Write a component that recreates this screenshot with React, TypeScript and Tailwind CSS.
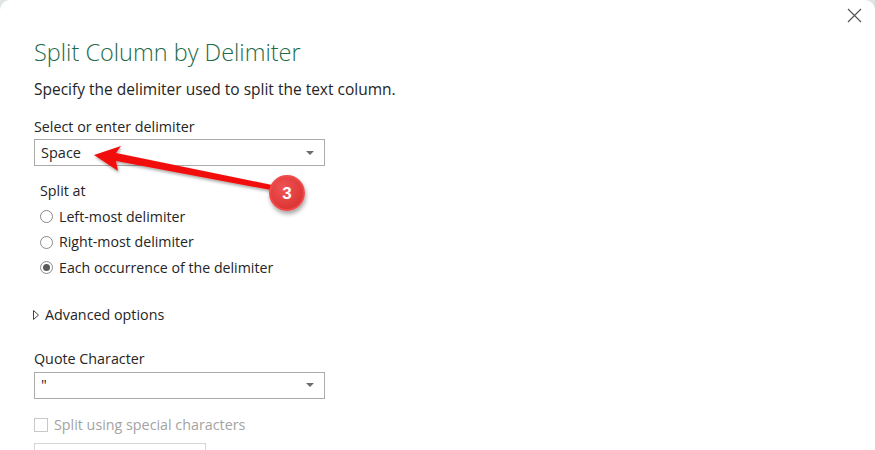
const FONT = "font-['Segoe_UI','Open_Sans',sans-serif]";

function Caret() {
  return (
    <svg width="8" height="4" viewBox="0 0 8 4" className="shrink-0">
      <path d="M0 0 L8 0 L4 4 Z" fill="#6b6b6b" />
    </svg>
  );
}

function SelectBox({ value }: { value: string }) {
  return (
    <div className="flex h-[27px] w-[291px] items-center justify-between border border-[#ababab] bg-white pl-[6px] pr-[10px] text-[14.5px] text-[#252525]">
      <span className="leading-5">{value}</span>
      <Caret />
    </div>
  );
}

function Radio({ label, checked }: { label: string; checked?: boolean }) {
  return (
    <div className="flex h-[25.5px] items-center gap-[6px]">
      <span className="flex h-[13px] w-[13px] items-center justify-center rounded-full border border-[#8a8a8a] bg-white">
        {checked && <span className="h-[7px] w-[7px] rounded-full bg-[#5a5a5a]" />}
      </span>
      <span className="text-[14.2px] leading-5 text-[#252525]">{label}</span>
    </div>
  );
}

function Annotation() {
  return (
    <>
      <svg
        className="pointer-events-none absolute left-0 top-0"
        width="875"
        height="450"
        viewBox="0 0 875 450"
      >
        <defs>
          <filter id="sh" x="-10%" y="-30%" width="130%" height="180%">
            <feDropShadow dx="1" dy="2" stdDeviation="1.5" floodColor="#000" floodOpacity="0.35" />
          </filter>
        </defs>
        <path
          d="M94 155 L121 146 L116 153 L272 185 L271 190 L116 161 L118 171 Z"
          fill="#f20d0d"
          filter="url(#sh)"
        />
      </svg>
      <div className="absolute left-[269px] top-[175px] flex h-[36px] w-[36px] items-center justify-center rounded-full border-2 border-[#f04a4a] bg-[radial-gradient(circle_at_40%_35%,#f05454,#d42a2a)] shadow-[1px_3px_4px_rgba(0,0,0,0.35)]">
        <span className="font-['Liberation_Sans',sans-serif] text-[17px] font-bold leading-none text-white">3</span>
      </div>
    </>
  );
}

export default function App() {
  return (
    <div className={`h-[450px] w-[875px] overflow-hidden bg-[#dfe5e2] ${FONT}`}>
      <div className="relative h-[450px] w-[875px] rounded-t-[10px] bg-white px-[34px]">
        <button type="button" className="absolute right-[13px] top-[8px] h-[15px] w-[15px]">
          <svg width="15" height="15" viewBox="0 0 15 15">
            <path d="M1 1 L14 14 M14 1 L1 14" stroke="#555" strokeWidth="1.2" />
          </svg>
        </button>

        <h1 className="pt-[36px] text-[23.5px] font-light leading-8 text-[#1e6b48]">
          Split Column by Delimiter
        </h1>
        <p className="mt-[11px] text-[15.5px] leading-5 text-[#252525]">
          Specify the delimiter used to split the text column.
        </p>

        <p className="mt-[18px] text-[14.3px] leading-5 text-[#252525]">Select or enter delimiter</p>
        <div className="mt-[2px]">
          <SelectBox value="Space" />
        </div>

        <div className="pl-[6px]">
          <p className="mt-[15px] text-[14.3px] leading-5 text-[#252525]">Split at</p>
          <div className="mt-[3px] flex flex-col">
            <Radio label="Left-most delimiter" />
            <Radio label="Right-most delimiter" />
            <Radio label="Each occurrence of the delimiter" checked />
          </div>
        </div>

        <div className="mt-[24px] flex h-5 items-center gap-[6px]">
          <svg width="6" height="10" viewBox="0 0 6 10" className="-ml-px">
            <path d="M0.5 0.5 L5.5 5 L0.5 9.5 Z" fill="none" stroke="#444" strokeWidth="1" />
          </svg>
          <span className="text-[14.3px] leading-5 text-[#252525]">Advanced options</span>
        </div>

        <p className="mt-[24px] text-[14.3px] leading-5 text-[#252525]">Quote Character</p>
        <div className="mt-[3px]">
          <SelectBox value={'"'} />
        </div>

        <div className="mt-[16px] flex h-5 items-center gap-[6px]">
          <span className="h-[14px] w-[14px] border border-[#c8c8c8] bg-white" />
          <span className="text-[14.3px] leading-5 text-[#a3a3a3]">Split using special characters</span>
        </div>
        <div className="mt-[8px] h-[30px] w-[172px] border border-[#d6d6d6]" />

        <Annotation />
      </div>
    </div>
  );
}
